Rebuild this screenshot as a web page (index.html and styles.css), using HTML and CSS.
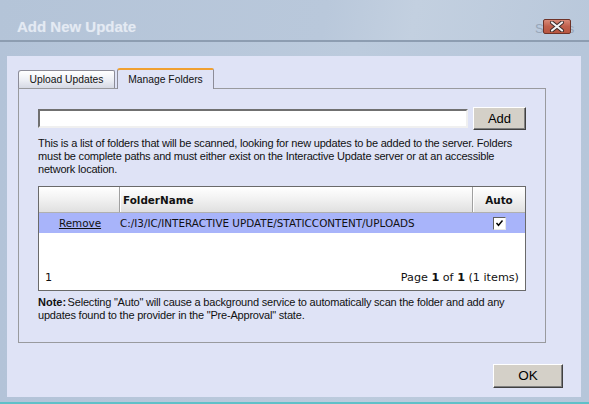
FILE: index.html
```html
<!DOCTYPE html>
<html>
<head>
<meta charset="utf-8">
<link rel="stylesheet" href="styles.css">
</head>
<body>
<div class="screen">
  <div class="titlebar">
    <div class="title">Add New Update</div>
    <div class="closewrap">
      <span class="ghost">Status</span>
      <div class="close"><svg width="16" height="11" viewBox="0 0 16 11"><path d="M3 1.5 L13 9.5 M13 1.5 L3 9.5" stroke="#3a2a28" stroke-width="4" stroke-linecap="round"/><path d="M3 1.5 L13 9.5 M13 1.5 L3 9.5" stroke="#f4f4f4" stroke-width="2.2" stroke-linecap="round"/></svg></div>
    </div>
  </div>
  <div class="content">
    <div class="tabs">
      <div class="tab">Upload Updates</div>
      <div class="tab active">Manage Folders</div>
    </div>
    <div class="panel">
      <div class="addrow">
        <div class="textbox"></div>
        <div class="btn add">Add</div>
      </div>
      <p class="desc">This is a list of folders that will be scanned, looking for new updates to be added to the server. Folders must be complete paths and must either exist on the Interactive Update server or at an accessible network location.</p>
      <div class="grid">
        <div class="ghead">
          <div class="c1"></div>
          <div class="c2">FolderName</div>
          <div class="c3">Auto</div>
        </div>
        <div class="grow">
          <div class="c1"><span class="link">Remove</span></div>
          <div class="c2">C:/I3/IC/INTERACTIVE UPDATE/STATICCONTENT/UPLOADS</div>
          <div class="c3"><span class="chk"><svg width="9" height="8" viewBox="0 0 9 8"><path d="M1.5 4 L3.5 6.3 L7.5 1.5" fill="none" stroke="#000" stroke-width="1.4"/></svg></span></div>
        </div>
        <div class="gempty"></div>
        <div class="pager">
          <span>1</span>
          <span>Page <b>1</b> of <b>1</b> (1 items)</span>
        </div>
      </div>
      <p class="note"><b class="lbl">Note:</b>Selecting "Auto" will cause a background service to automatically scan the folder and add any updates found to the provider in the "Pre-Approval" state.</p>
    </div>
    <div class="footer">
      <div class="btn ok">OK</div>
    </div>
  </div>
</div>
</body>
</html>
```
FILE: styles.css
```css
html, body {
  margin: 0;
  padding: 0;
}
body {
  width: 589px;
  height: 404px;
  overflow: hidden;
  font-family: "Liberation Sans", Arial, sans-serif;
}
.screen {
  width: 589px;
  height: 404px;
  background: linear-gradient(90deg, #b3c3d8 0%, #bccbdd 60%, #b6c6da 100%);
  border-bottom: 2px solid #5fc0c8;
  box-sizing: border-box;
  display: flex;
  flex-direction: column;
}
.titlebar {
  height: 40px;
  border-bottom: 2px solid #8d9db1;
  display: flex;
  align-items: flex-start;
  justify-content: space-between;
  background: linear-gradient(100deg, #b4c4d8 0%, #b9c8db 55%, #c3d0e0 70%, #b9c8db 100%);
}
.title {
  margin: 18px 0 0 17px;
  font-size: 15px;
  font-weight: bold;
  color: #e4eaf3;
  text-shadow: 0 0 1px #c8d4e2;
  line-height: 18px;
}
.closewrap {
  position: relative;
  margin: 19px 18px 0 0;
}
.ghost {
  position: absolute;
  left: -8px;
  top: 2px;
  font-size: 13px;
  color: #98a6b8;
  letter-spacing: 0.5px;
}
.close {
  position: relative;
  width: 26px;
  height: 13px;
  background: linear-gradient(180deg, #d98a78 0%, #c0604c 50%, #b85640 100%);
  border: 1px solid #6e3328;
  border-radius: 2px;
  display: flex;
  align-items: center;
  justify-content: center;
}
.content {
  margin: 14px 8px 0 7px;
  height: 341px;
  background: #dfe3f6;
  padding: 12px 0 0 11px;
  box-sizing: border-box;
  display: flex;
  flex-direction: column;
}
.tabs {
  display: flex;
  align-items: flex-end;
  gap: 2px;
  height: 20px;
  position: relative;
  z-index: 1;
}
.tab {
  width: 95px;
  height: 17px;
  border: 1px solid #8c8c98;
  border-bottom: none;
  border-radius: 3px 2px 0 0;
  background: linear-gradient(180deg, #ffffff 0%, #eef0f6 50%, #d6d9e4 100%);
  font-size: 10.3px;
  color: #111;
  text-align: center;
  line-height: 18px;
}
.tab.active {
  height: 19px;
  border-top: 2px solid #f0a030;
  background: #dfe3f6;
  line-height: 20px;
  margin-bottom: -1px;
}
.panel {
  border: 1px solid #999a9e;
  padding: 0 0 0 19px;
  box-sizing: border-box;
  width: 528px;
  height: 255px;
}
.addrow {
  display: flex;
  align-items: center;
  gap: 5px;
  margin-top: 18px;
}
.textbox {
  width: 426px;
  height: 15px;
  background: #fff;
  border: 2px solid;
  border-color: #707070 #f0f0f0 #f0f0f0 #707070;
}
.btn {
  background: #d4d0c8;
  border: 1px solid;
  border-color: #ffffff #404040 #404040 #ffffff;
  box-shadow: inset -1px -1px 0 #808080;
  font-size: 13px;
  color: #000;
  text-align: center;
  box-sizing: border-box;
}
.add {
  width: 53px;
  height: 23px;
  line-height: 21px;
}
.desc {
  margin: 7px 0 0 0;
  width: 492px;
  font-size: 11px;
  letter-spacing: -0.2px;
  line-height: 12.8px;
  color: #111;
}
.grid {
  margin-top: 11px;
  width: 488px;
  height: 105px;
  border: 1px solid #6a6a6a;
  box-sizing: border-box;
  background: #fff;
  display: flex;
  flex-direction: column;
  font-family: "DejaVu Sans", Verdana, sans-serif;
  font-size: 10.4px;
  color: #111;
}
.ghead {
  display: flex;
  height: 26px;
  background: linear-gradient(180deg, #ffffff 0%, #f4f4f4 40%, #e0e0e0 100%);
  border-bottom: 1px solid #b0b0b0;
  box-sizing: border-box;
  font-weight: bold;
}
.ghead > div {
  display: flex;
  align-items: center;
}
.c1 { width: 80px; }
.c2 { flex: 1; padding-left: 3px; }
.c3 { width: 52px; justify-content: center; }
.ghead .c1 { border-right: 1px solid #a0a0a0; box-shadow: 1px 0 0 #fff; }
.ghead .c2 { border-right: 1px solid #a0a0a0; box-shadow: 1px 0 0 #fff; padding-left: 3px; }
.grow {
  display: flex;
  height: 20px;
  background: #a8b4fa;
  align-items: center;
}
.grow > div { display: flex; align-items: center; }
.grow .c1 { justify-content: center; padding-left: 1px; }
.grow .c2 { padding-left: 0; }
.link {
  text-decoration: underline;
  color: #111;
}
.chk {
  width: 11px;
  height: 11px;
  background: #fff;
  border: 1px solid;
  border-color: #606060 #e8e8e8 #e8e8e8 #606060;
  display: flex;
  align-items: center;
  justify-content: center;
}
.gempty { flex: 1; }
.pager {
  height: 22px;
  display: flex;
  justify-content: space-between;
  align-items: center;
  padding: 0 6px 2px 6px;
  font-size: 11.2px;
}
.note {
  margin: 5px 0 0 0;
  width: 494px;
  font-size: 11px;
  letter-spacing: -0.2px;
  line-height: 12.8px;
  color: #111;
}
.lbl {
  letter-spacing: 0;
  margin-right: 1.5px;
}
.footer {
  display: flex;
  justify-content: flex-end;
  padding: 21px 18px 0 0;
}
.ok {
  width: 70px;
  height: 24px;
  line-height: 22px;
  font-size: 13.5px;
}
```
